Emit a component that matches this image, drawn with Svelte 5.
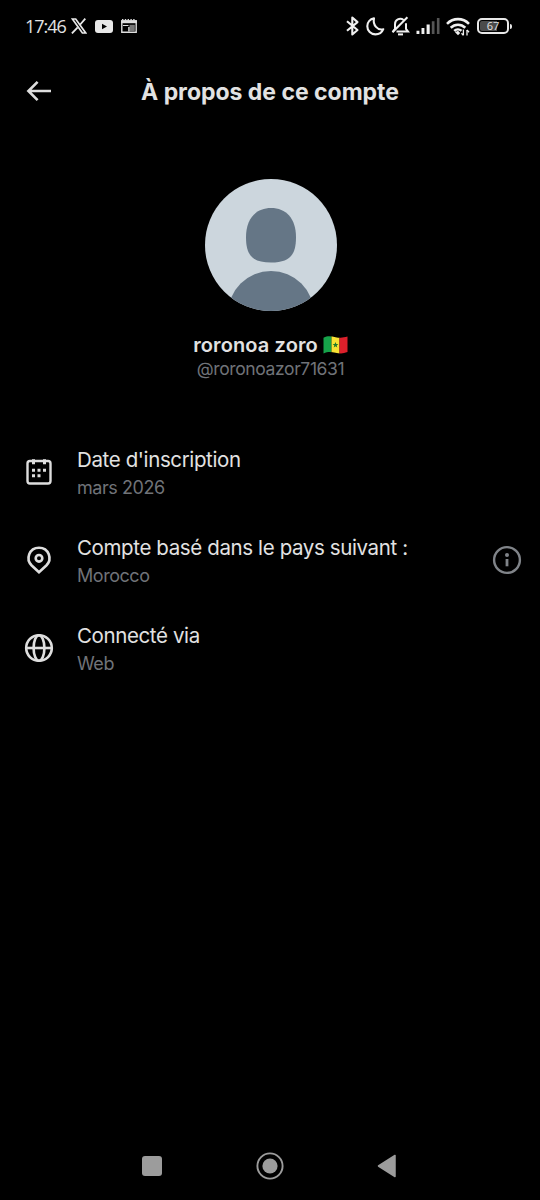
<script lang="ts">
  type Row = {
    icon: 'calendar' | 'pin' | 'globe';
    label: string;
    value: string;
    info?: boolean;
  };

  const account = {
    name: 'roronoa zoro',
    handle: '@roronoazor71631'
  };

  const rows: Row[] = [
    { icon: 'calendar', label: "Date d'inscription", value: 'mars 2026' },
    { icon: 'pin', label: 'Compte basé dans le pays suivant :', value: 'Morocco', info: true },
    { icon: 'globe', label: 'Connecté via', value: 'Web' }
  ];
</script>

<div class="screen">
  <div class="status-bar">
    <div class="status-left">
      <span class="clock">17:46</span>
      <svg class="x-logo" width="16" height="16" viewBox="0 0 16 16" fill="none" stroke="#e8e8e8">
        <path d="M1.4 1h3.3l10 14h-3.300z" stroke-width="1.700" />
        <path d="M14.300.7 8.800 7M6.700 9.300.9 15.400" stroke-width="1.800" />
      </svg>
      <svg class="video" width="18" height="13" viewBox="0 0 18 13">
        <rect width="18" height="13" rx="3" fill="#e8e8e8" />
        <path d="M7 3.700v5.600l5-2.800z" fill="#000" />
      </svg>
      <svg class="news" width="16" height="14" viewBox="0 0 16 14">
        <path d="M.8 2h14.400v11.200H.8z" fill="none" stroke="#dedede" stroke-width="1.400" />
        <path d="M0 1.300h16v2.900H0z" fill="#dedede" />
        <path d="M1 .7h14" stroke="#dedede" stroke-width="1.400" stroke-dasharray="1.400 1.400" />
        <path d="M2 6.500h5.500" stroke="#dedede" stroke-width="1" />
        <path d="M8.500 5.800h5.300v6.400H8.500z" fill="#777" />
        <path d="M7.200 8h1.400v4.500H7.200z" fill="#dedede" />
      </svg>
    </div>

    <div class="status-right">
      <svg width="13" height="20" viewBox="0 0 13 20" fill="none" stroke="#f0f0f0" stroke-width="2.100" stroke-linejoin="round">
        <path d="M1 5.300 11.500 14 6.300 18.500v-17l5.200 4.600L1 14.800" />
      </svg>
      <svg class="moon" width="19" height="19" viewBox="0 0 19 19" fill="none" stroke="#f0f0f0" stroke-width="2.100" stroke-linejoin="round">
        <path d="M8 1.400C3.900 2.200 1.300 5.400 1.300 9.200c0 4.600 3.600 8.200 8.100 8.200 3.600 0 6.600-2 7.900-5.200-5.700 1.500-10.700-4-9.300-10.800z" />
      </svg>
      <svg class="bell" width="19" height="20" viewBox="0 0 19 20" fill="none" stroke="#f0f0f0" stroke-width="2">
        <path d="M12.700 4C8.600 1.200 4 4 4 8.200v4.700L1.600 16M15 7.200v5.700l2 2.700H5.500" />
        <path d="M16.400 1.300 1.500 16.200" />
        <path d="M7 18.400h5" stroke-width="2" />
      </svg>
      <svg class="signal" width="24" height="16" viewBox="0 0 24 16">
        <path d="M.5 12.800h2.900V16H.5zM5.500 10h2.900v6H5.500zM10.600 6.400h3.100V16h-3.100z" fill="#f0f0f0" />
        <path d="M15.800 3.200h2.700V16h-2.700zM20.900 0h2.600v16h-2.600z" fill="#555" />
      </svg>
      <svg class="wifi" width="24" height="19" viewBox="0 0 24 19" fill="none" stroke="#f0f0f0" stroke-width="2.600">
        <path d="M1 6.800c6.200-6.200 15.800-6.200 22 0M4.700 10.700c4.200-4 10.400-4 14.600 0M8.300 14c2-2 5-2 7.200-.3" />
        <path d="m9 15.200 3 3 2.200-2.200-2.200-2.300z" fill="#f0f0f0" stroke="none" />
        <path d="M17.400 12.500v5.800M21 13v5.500" stroke-width="1.300" />
        <path d="m15.500 16.200 1.900 2.100M21 13l2 2.300" stroke-width="1.300" />
      </svg>
      <div class="battery">
        <span class="battery-level"></span>
        <span class="battery-text">67</span>
      </div>
      <span class="battery-tip"></span>
    </div>
  </div>

  <header class="top-bar">
    <svg class="back" width="26" height="22" viewBox="0 0 26 22" fill="none" stroke="#dedede" stroke-width="2.600">
      <path d="M11.600 1.800 2.400 11l9.200 9.200M2.400 11H25" />
    </svg>
    <h1>À propos de ce compte</h1>
  </header>

  <section class="profile">
    <svg class="avatar" width="132" height="132" viewBox="0 0 132 132">
      <defs>
        <clipPath id="avatar-clip"><circle cx="66" cy="66" r="66" /></clipPath>
      </defs>
      <g clip-path="url(#avatar-clip)">
        <path d="M0 0h132v132H0z" fill="#ccd6dd" />
        <path d="M66 29c15 0 25 10.500 25 29 0 18-6 25.500-25 25.500S41 76 41 58c0-18.500 10-29 25-29z" fill="#657686" />
        <circle cx="66" cy="135" r="43" fill="#657686" />
      </g>
    </svg>
    <div class="name">
      <span>{account.name}</span>
      <svg width="25" height="18" viewBox="0 0 25 18">
        <defs>
          <clipPath id="flag-clip">
            <path d="M.5 1.800C5-.6 8.300.4 12.500 1.200S20 2 24.500.6v15.500c-4.500 1.800-7.800 1.500-12 .7S5 15.500.5 17.500z" />
          </clipPath>
        </defs>
        <g clip-path="url(#flag-clip)">
          <path d="M0 0h8.500v18H0z" fill="#16a34a" />
          <path d="M8.500 0h8v18h-8z" fill="#f9e233" />
          <path d="M16.500 0H25v18h-8.500z" fill="#dc202b" />
          <path d="m12.500 6 .8 2h2.100l-1.700 1.400.6 2.100-1.800-1.200-1.800 1.200.6-2.100L9.600 8h2.100z" fill="#227a2c" />
        </g>
      </svg>
    </div>
    <p class="handle">{account.handle}</p>
  </section>

  <section class="rows">
    {#each rows as row}
      <div class="row">
        <div class="row-icon">
          {#if row.icon === 'calendar'}
            <svg width="28" height="28" viewBox="0 0 28 28" fill="none" stroke="#dedede" stroke-width="2.400">
              <rect x="2.500" y="3" width="23" height="22.500" rx="2.500" />
              <path d="M8.500 1.200v5M19.500 1.200v5" stroke-width="3" />
              <path d="M7 12.300h3M12.500 12.300h3M18 12.300h3M7 17.700h3M12.500 17.700h3" stroke-width="3" />
            </svg>
          {:else if row.icon === 'pin'}
            <svg width="28" height="30" viewBox="0 0 28 30" fill="none" stroke="#dedede" stroke-width="2.600">
              <path d="M14 27.200 6.700 20.500C.3 14.300 4.100 2.800 14 2.800s13.700 11.500 7.300 17.700z" />
              <circle cx="14" cy="13.300" r="3.300" />
            </svg>
          {:else}
            <svg width="30" height="30" viewBox="0 0 30 30" fill="none" stroke="#dedede" stroke-width="2.600">
              <circle cx="15" cy="15" r="12.800" />
              <ellipse cx="15" cy="15" rx="5.400" ry="12.800" />
              <path d="M2.200 15h25.600" />
            </svg>
          {/if}
        </div>
        <div class="row-text">
          <p class="label">{row.label}</p>
          <p class="value">{row.value}</p>
        </div>
        {#if row.info}
          <svg class="info" width="30" height="30" viewBox="0 0 30 30">
            <circle cx="15" cy="15" r="12.900" fill="none" stroke="#808489" stroke-width="2.400" />
            <circle cx="15" cy="9.900" r="2" fill="#808489" />
            <path d="M13.600 14h2.800v7.300h-2.800z" fill="#808489" />
          </svg>
        {/if}
      </div>
    {/each}
  </section>

  <nav class="nav-bar">
    <svg width="20" height="20" viewBox="0 0 20 20">
      <rect width="20" height="20" rx="3" fill="#9c9c9c" />
    </svg>
    <svg width="28" height="28" viewBox="0 0 28 28">
      <circle cx="14" cy="14" r="12.600" fill="none" stroke="#9c9c9c" stroke-width="1.900" />
      <circle cx="14" cy="14" r="7.600" fill="#9c9c9c" />
    </svg>
    <svg width="20" height="24" viewBox="0 0 20 24">
      <path d="M1.500 12 18 1.500v21z" fill="#9c9c9c" stroke="#9c9c9c" stroke-width="1.500" stroke-linejoin="round" />
    </svg>
  </nav>
</div>

<style>
  :global(body) {
    background: #000;
  }

  .screen {
    width: 540px;
    height: 1200px;
    display: flex;
    flex-direction: column;
    overflow: hidden;
    background: #000;
    color: #e2e2e2;
    font-family: Inter, 'Liberation Sans', sans-serif;
  }

  svg {
    display: block;
    flex: none;
  }

  p,
  h1 {
    margin: 0;
    white-space: nowrap;
  }

  .status-bar {
    height: 52px;
    padding: 0 28px 0 25px;
    display: flex;
    align-items: center;
    justify-content: space-between;
  }

  .status-left,
  .status-right {
    display: flex;
    align-items: center;
  }

  .clock {
    width: 46px;
    font-family: 'Open Sans', sans-serif;
    font-size: 18px;
    letter-spacing: -1px;
    line-height: 24px;
  }

  .video {
    margin-left: 8px;
  }

  .news {
    margin-left: 8px;
  }

  .moon {
    margin-left: 7px;
  }

  .bell {
    margin-left: 6px;
  }

  .signal {
    margin-left: 6px;
  }

  .wifi {
    margin-left: 6px;
  }

  .battery {
    position: relative;
    box-sizing: border-box;
    width: 32px;
    height: 16px;
    margin-left: 7px;
    border: 2px solid #e8e8e8;
    border-radius: 5px;
    display: grid;
    place-items: center;
  }

  .battery-level {
    position: absolute;
    top: 1px;
    bottom: 1px;
    left: 1px;
    width: 17px;
    border-radius: 2px 0 0 2px;
    background: #4b4b4b;
  }

  .battery-text {
    position: relative;
    font-family: 'Open Sans', sans-serif;
    font-size: 11px;
    line-height: 12px;
  }

  .battery-tip {
    width: 2px;
    height: 5px;
    margin-left: 1px;
    border-radius: 0 2px 2px 0;
    background: #e8e8e8;
  }

  .top-bar {
    height: 80px;
    padding-left: 26px;
    display: grid;
    grid-template-columns: 26px 1fr 52px;
    align-items: center;
  }

  .top-bar .back {
    margin-top: -2px;
  }

  .top-bar h1 {
    font-size: 23px;
    font-weight: 700;
    letter-spacing: -0.02px;
    text-align: center;
  }

  .profile {
    padding: 47px 0 0 1px;
    display: flex;
    flex-direction: column;
    align-items: center;
  }

  .name {
    display: flex;
    align-items: center;
    gap: 5px;
    margin-top: 22px;
    font-size: 20px;
    font-weight: 600;
    letter-spacing: 0.12px;
    line-height: 24px;
  }

  .handle {
    margin-top: 1px;
    color: #707378;
    font-size: 17.5px;
    letter-spacing: -0.38px;
    line-height: 22px;
  }

  .rows {
    margin-top: 48px;
    display: grid;
  }

  .row {
    height: 88px;
    padding: 0 18px 0 23px;
    display: flex;
    align-items: center;
  }

  .row-icon {
    width: 31px;
    display: grid;
    place-items: center;
  }

  .row-text {
    flex: 1;
    padding: 3px 0 0 23px;
  }

  .label {
    font-size: 20.5px;
    letter-spacing: -0.38px;
    line-height: 28px;
  }

  .value {
    color: #707378;
    font-size: 18px;
    letter-spacing: -0.45px;
    line-height: 28px;
  }

  .nav-bar {
    margin-top: auto;
    height: 68px;
    padding: 0 143px 0 142px;
    display: flex;
    align-items: center;
    justify-content: space-between;
  }
</style>
